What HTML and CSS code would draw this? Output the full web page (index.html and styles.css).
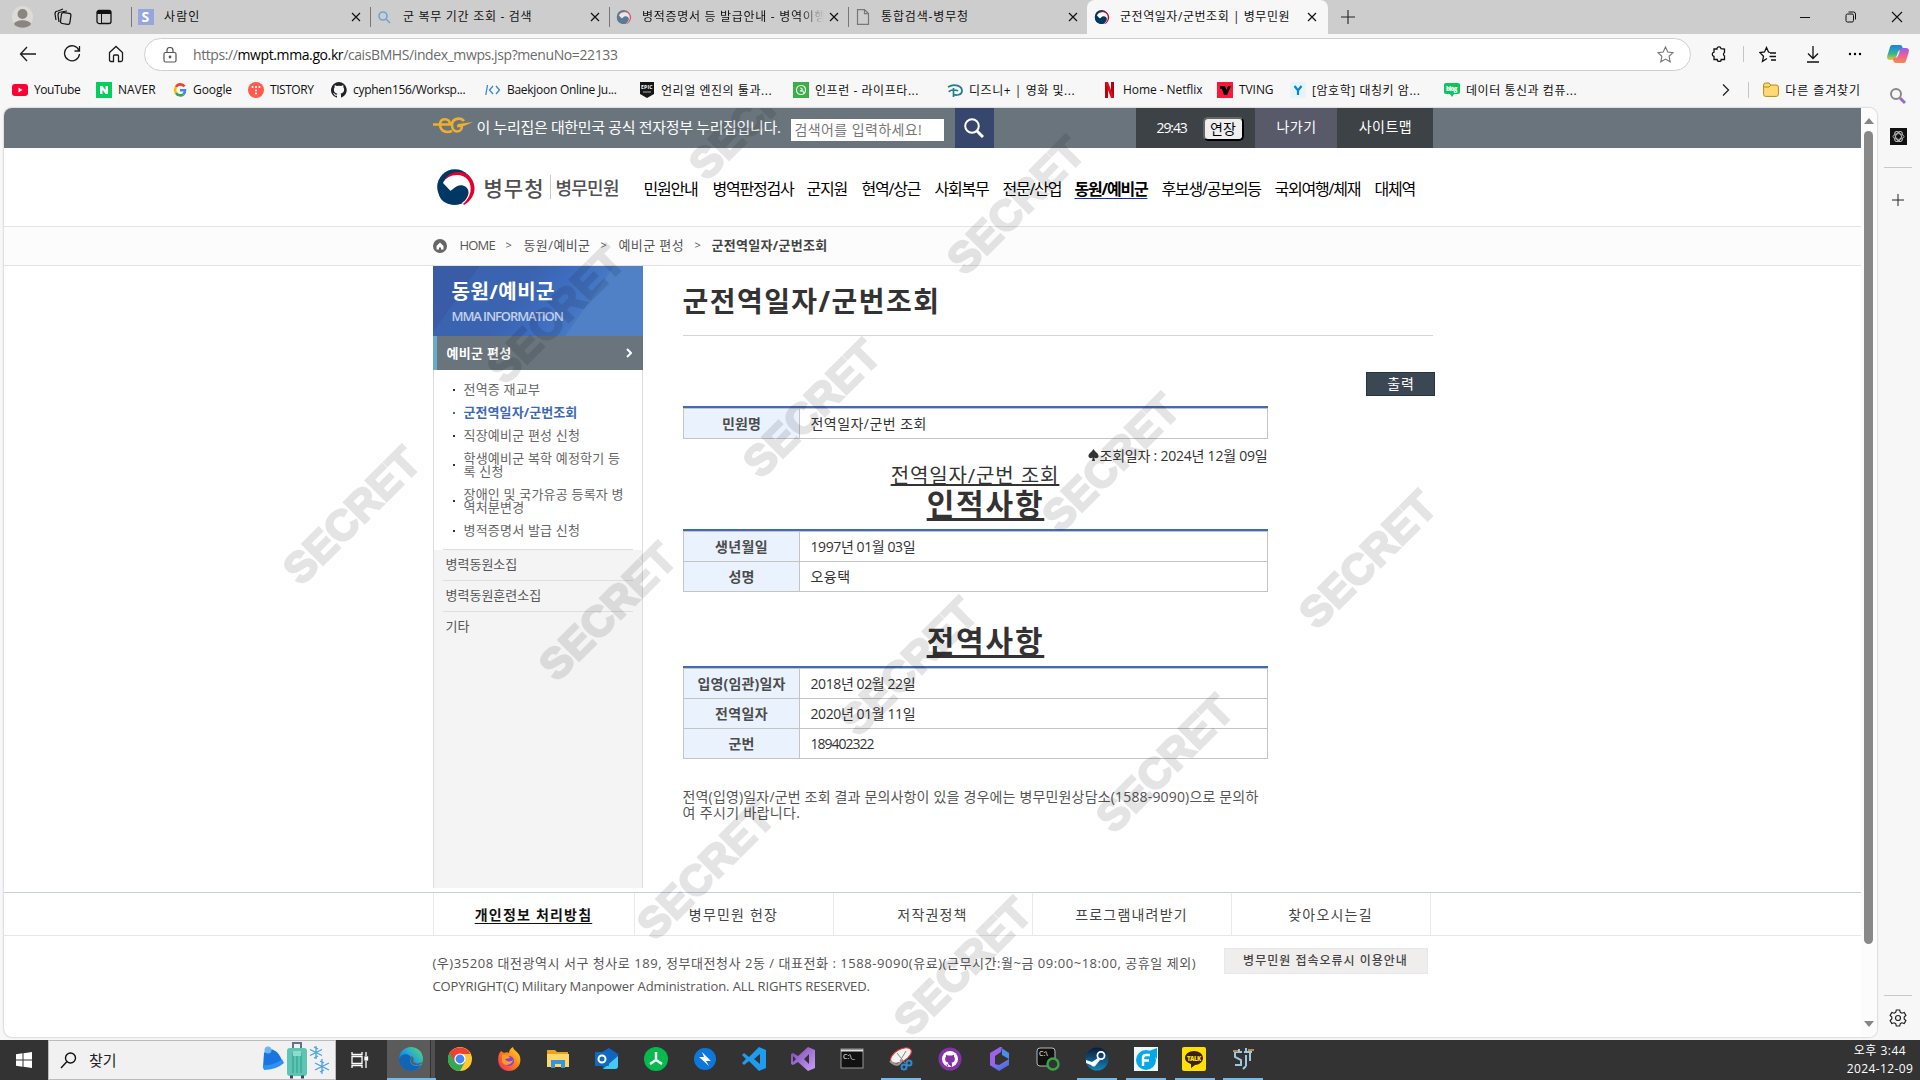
FILE: index.html
```html
<!DOCTYPE html>
<html lang="ko">
<head>
<meta charset="utf-8">
<title>군전역일자/군번조회 | 병무민원</title>
<link rel="stylesheet" href="styles.css">
</head>
<body>
<svg width="0" height="0" class="defs">
  <defs>
    <symbol id="x" viewBox="0 0 12 12"><path d="M2 2l8 8M10 2l-8 8" stroke="#111" stroke-width="1.2"/></symbol>
    <symbol id="taegeuk" viewBox="0 0 38 36">
      <circle cx="18" cy="18" r="17.800" fill="#003764"/>
      <path d="M8 10C13 2 27 0 34 9c7 10 3 21-7 27z" fill="#e4002b"/>
      <path d="M6 14C10 5 25 3 31 11c5 7 3 17-5 24z" fill="#fff"/>
      <path d="M4 16c1 8 8 8 12 4 4-4 9-5 13-2 5 4 2 12-4 16-9 4-20 1-23-8z" fill="#003764"/>
    </symbol>
    <linearGradient id="gEdge" x1="0" y1="1" x2="1" y2="0"><stop offset="0" stop-color="#0c59a4"/><stop offset=".5" stop-color="#1b9de2"/><stop offset="1" stop-color="#5fe06a"/></linearGradient>
    <linearGradient id="gVs" x1="0" y1="0" x2="1" y2="1"><stop offset="0" stop-color="#7b45b5"/><stop offset="1" stop-color="#c8a0f5"/></linearGradient>
    <linearGradient id="gFox" x1="0" y1="1" x2="1" y2="0"><stop offset="0" stop-color="#f0246b"/><stop offset=".5" stop-color="#ff7a1c"/><stop offset="1" stop-color="#ffe226"/></linearGradient>
    <linearGradient id="g365" x1="0" y1="0" x2="1" y2="1"><stop offset="0" stop-color="#b06cf0"/><stop offset="1" stop-color="#2f6fe0"/></linearGradient>
    <linearGradient id="gSteam" x1="0" y1="0" x2="0" y2="1"><stop offset="0" stop-color="#0b1a3c"/><stop offset="1" stop-color="#1287b8"/></linearGradient>
    <linearGradient id="gCo1" x1="0" y1="0" x2="0" y2="1"><stop offset="0" stop-color="#1f7fe8"/><stop offset=".6" stop-color="#32b98c"/><stop offset="1" stop-color="#f4c62c"/></linearGradient>
    <linearGradient id="gCo2" x1="0" y1="0" x2="0" y2="1"><stop offset="0" stop-color="#9a5bf0"/><stop offset=".5" stop-color="#ec5f9c"/><stop offset="1" stop-color="#fb8a4a"/></linearGradient>
  </defs>
</svg>

<header class="tabs">
  <div class="tab-tools">
    <svg width="21" height="28" viewBox="0 0 21 28"><ellipse cx="10.500" cy="14" rx="10.500" ry="11" fill="#dedbd7"/><circle cx="10.500" cy="11" r="5" fill="#8b8581"/><path d="M2 21c2-5 15-5 17 0-3 5-14 5-17 0z" fill="#8b8581"/></svg>
    <svg width="18" height="18" viewBox="0 0 18 18" fill="none" stroke="#111" stroke-width="1.200"><rect x="7" y="5" width="9.500" height="11" rx="2" transform="rotate(8 12 10)"/><path d="M5 14l-1-7c0-2 1-3 3-3l6-1M2 12L1 6c0-2 1-3 3-3l5-2"/></svg>
    <svg width="16" height="16" viewBox="0 0 16 16" fill="none" stroke="#111" stroke-width="1.300"><rect x="1" y="1.500" width="14" height="13" rx="2"/><path d="M1 3.500h14M4.500 4v10.500" stroke-width="3"/><path d="M4 5v9" stroke="#cdcdcd" stroke-width="2"/></svg>
  </div>
  <div class="tab"><svg width="16" height="16"><rect width="16" height="16" fill="#94a6dd"/><text x="3.500" y="13" font-size="14" font-weight="700" fill="#fff">S</text></svg><span class="tab-title wide">사람인</span><svg class="close"><use href="#x"/></svg></div>
  <div class="tab"><svg width="16" height="16" viewBox="0 0 16 16" fill="none" stroke="#6fa3d6" stroke-width="1.600"><circle cx="6" cy="7" r="4"/><path d="M9 10l4 4"/></svg><span class="tab-title">군 복무 기간 조회 - 검색</span><svg class="close"><use href="#x"/></svg></div>
  <div class="tab"><svg width="16" height="14" opacity=".55"><use href="#taegeuk" width="16" height="14"/></svg><span class="tab-title fade">병적증명서 등 발급안내 - 병역이행</span><svg class="close"><use href="#x"/></svg></div>
  <div class="tab"><svg width="16" height="16" viewBox="0 0 16 16" fill="none" stroke="#777" stroke-width="1.200"><path d="M2.500.6h7l4 4v10.800h-11zM9.500.6v4h4"/></svg><span class="tab-title late">통합검색-병무청</span><svg class="close"><use href="#x"/></svg></div>
  <div class="tab active"><svg width="16" height="14"><use href="#taegeuk" width="16" height="14"/></svg><span class="tab-title">군전역일자/군번조회 | 병무민원</span><svg class="close"><use href="#x"/></svg></div>
  <svg class="newtab" width="14" height="14" viewBox="0 0 14 14" stroke="#222" stroke-width="1.100"><path d="M7 0v14M0 7h14"/></svg>
  <div class="winctl">
    <svg width="12" height="12" viewBox="0 0 12 12" stroke="#111"><path d="M1 6.500h10"/></svg>
    <svg width="12" height="12" viewBox="0 0 12 12" fill="none" stroke="#111"><rect x="1" y="3" width="7.500" height="8" rx="1.500"/><path d="M3.500 1h5q2 0 2 2v5.500"/></svg>
    <svg width="12" height="12" viewBox="0 0 12 12" stroke="#111" stroke-width="1.100"><path d="M1 1l10 10M11 1L1 11"/></svg>
  </div>
</header>

<div class="toolbar">
  <div class="nav-icons">
    <svg width="18" height="18" viewBox="0 0 18 18" fill="none" stroke="#1b1b1b" stroke-width="1.300"><path d="M17 9H1.500M8 2L1.500 9 8 16"/></svg>
    <svg width="18" height="18" viewBox="0 0 18 18" fill="none" stroke="#1b1b1b" stroke-width="1.300"><path d="M16 5.500A7.500 7.500 0 1 0 16.500 9M16.500 1v5h-5"/></svg>
    <svg width="16" height="18" viewBox="0 0 16 18" fill="none" stroke="#1b1b1b" stroke-width="1.300"><path d="M1.500 7.500L8 1.500l6.500 6v7.500q0 1.500-1.500 1.500h-2.500V11q0-1-1-1h-3q-1 0-1 1v5.500H3q-1.500 0-1.500-1.500z"/></svg>
  </div>
  <div class="url">
    <svg width="14" height="16" viewBox="0 0 14 16" fill="none" stroke="#555" stroke-width="1.200"><rect x="1" y="5.500" width="12" height="9.500" rx="1.500"/><path d="M4 5.500V3.500a3 3 0 0 1 6 0v2"/><circle cx="7" cy="10" r=".8" fill="#555"/></svg>
    <span class="address">https://<b>mwpt.mma.go.kr</b>/caisBMHS/index_mwps.jsp?menuNo=22133</span>
    <svg width="17" height="17" viewBox="0 0 17 17" fill="none" stroke="#777" stroke-width="1.100"><path id="star" d="M8.500 1l2.300 5 5.200.6-3.900 3.700 1.100 5.500-4.700-2.700-4.700 2.700 1.100-5.500L1 6.600 6.200 6z"/></svg>
  </div>
  <div class="actions">
    <svg width="16" height="16" viewBox="0 0 16 16" fill="none" stroke="#111" stroke-width="1.300"><path d="M3 3h3a2 2 0 0 1 4-.3L13.500 3v3.500a2 2 0 0 0 0 3.500v3.500h-3.300a2 2 0 0 1-4 0H3V10.500a2.200 2.200 0 0 1 0-4.300z"/></svg>
    <i class="sep"></i>
    <svg width="18" height="17" viewBox="0 0 18 17" fill="none" stroke="#111" stroke-width="1.300"><path d="M11 6.500L9.500 6 7.500 1.500 5.500 6 1 6.600l3.500 3.700-1 5L8 12.500M11 7h6M10.500 10.500h6.500M12 14h5"/></svg>
    <svg width="14" height="17" viewBox="0 0 14 17" fill="none" stroke="#111" stroke-width="1.300"><path d="M7 0v12M2 7.500l5 5 5-5M1 16h12"/></svg>
    <svg width="14" height="4"><circle cx="2" cy="2" r="1.200"/><circle cx="7" cy="2" r="1.200"/><circle cx="12" cy="2" r="1.200"/></svg>
  </div>
  <svg class="copilot" width="22" height="20" viewBox="0 0 22 20"><path d="M5 1h8q2 0 2.500 2L16 6h-2q-2 0-3 2l-2 6q-1 2-3 2H3q-4 0-2.500-5L3 3Q3.500 1 5 1z" fill="url(#gCo1)"/><path d="M17 19H9q-2 0-2.500-2L6 14h2q2 0 3-2l2-6q1-2 3-2h3q4 0 2.500 5L19 17q-.5 2-2 2z" fill="url(#gCo2)"/></svg>
</div>

<div class="bookmarks">
  <div class="bm-list">
    <a><svg width="16" height="12"><rect width="16" height="12" rx="3" fill="#f03"/><path d="M6.500 3.500v5l4-2.500z" fill="#fff"/></svg><span class="tight">YouTube</span></a>
    <a><svg width="16" height="16"><rect width="16" height="16" fill="#03cf5d"/><path d="M4 12V4h2.500l3 4.300V4H12v8H9.500l-3-4.300V12z" fill="#fff"/></svg><span class="flat">NAVER</span></a>
    <a><svg width="14" height="16" viewBox="0 0 14 16" fill="none" stroke-width="2.600"><path d="M11.500 4.500A5 5 0 0 0 3 5" stroke="#ea4335"/><path d="M3 5a5.500 5.500 0 0 0 0 6" stroke="#fbbc05"/><path d="M3 11a5 5 0 0 0 7.500 1.200" stroke="#34a853"/><path d="M10.500 12.200A5 5 0 0 0 12 8.300H7" stroke="#4285f4"/></svg><span class="flat">Google</span></a>
    <a><svg width="16" height="16"><circle cx="8" cy="8" r="8" fill="#ff5a4a"/><g fill="#fff"><circle cx="4.500" cy="5" r="1.100"/><circle cx="8" cy="5" r="1.100"/><circle cx="11.500" cy="5" r="1.100"/><circle cx="8" cy="8.300" r="1.100"/><circle cx="8" cy="11.500" r="1.100"/></g></svg><span class="tight">TISTORY</span></a>
    <a><svg width="16" height="16" viewBox="0 0 16 16"><path id="gh" d="M8 0a8 8 0 0 0-2.500 15.600c.4 0 .5-.2.500-.4v-1.500c-2.200.5-2.700-1-2.700-1-.4-.9-.9-1.200-.9-1.200-.7-.5.100-.5.100-.5.800.1 1.200.8 1.200.8.700 1.200 1.900.9 2.300.7.100-.5.300-.9.500-1.100-1.800-.2-3.600-.9-3.600-4 0-.9.300-1.600.8-2.100-.1-.2-.4-1 .1-2.100 0 0 .7-.2 2.200.8a7.500 7.500 0 0 1 4 0c1.500-1 2.200-.8 2.200-.8.400 1.100.2 1.900.1 2.100.5.600.8 1.300.8 2.100 0 3.100-1.900 3.800-3.700 4 .3.300.6.800.6 1.500v2.200c0 .2.100.5.500.4A8 8 0 0 0 8 0z" fill="#1f2328"/></svg><span class="mid">cyphen156/Worksp...</span></a>
    <a><svg width="16" height="12" viewBox="0 0 16 12" fill="none" stroke="#3a86c8" stroke-width="1.300"><path d="M2.500 1L.8 11M8 2L4.500 6 8 10M11 2l3.500 4L11 10"/></svg><span class="mid">Baekjoon Online Ju...</span></a>
    <a><svg width="15" height="16"><path d="M0 0h14v12l-7 4-7-4z" fill="#161616"/><text x="1" y="7" font-size="5" font-weight="700" fill="#fff" textLength="12">EPIC</text><path d="M3 10h8" stroke="#aaa"/></svg><span>언리얼 엔진의 툴과...</span></a>
    <a><svg width="16" height="16" fill="none"><rect width="16" height="16" fill="#3fae49"/><path d="M8 3.500c3 0 4.500 2 4.500 4.500S11 12.500 8 12.500 3.500 10.500 3.500 8 5 3.500 8 3.500zM7 6c3 0 3 2 0 3h3l1 2" stroke="#e8f7e8" stroke-width="1.200"/></svg><span>인프런 - 라이프타...</span></a>
    <a><svg width="16" height="16" fill="none" stroke="#1b7f8f" stroke-width="1.700"><path d="M1 5c7-4 14-1 14 4 0 4-6 5-9 3M6.500 6v9M2 10c1-3 8-2 9-1"/></svg><span>디즈니+ | 영화 및...</span></a>
    <a><svg width="15" height="16"><path d="M3 0h3v16H3zM9 0h3v16H9z" fill="#b1060f"/><path d="M3 0h3l6 16H9z" fill="#e50914"/></svg><span class="flat">Home - Netflix</span></a>
    <a><svg width="16" height="16"><rect width="16" height="16" fill="#ff153c"/><path d="M3 4h5l1.500 4L11 4h3l-4 9H7L5 7H3z"/></svg><span class="flat">TVING</span></a>
    <a><svg width="16" height="16"><rect width="16" height="16" fill="#e6f4fc"/><path d="M4.500 4L8 8.500 11.500 4M8 8.500V13" stroke="#0a86cf" stroke-width="2.200" fill="none"/></svg><span>[암호학] 대칭키 암...</span></a>
    <a><svg width="16" height="16"><path d="M2 1h12q2 0 2 2v7q0 2-2 2h-4l-2 3-2-3H2q-2 0-2-2V3q0-2 2-2z" fill="#0bc75b"/><text x="2" y="9" font-size="6" font-weight="800" fill="#fff" textLength="12">blog</text></svg><span>데이터 통신과 컴퓨...</span></a>
  </div>
  <svg class="more" width="8" height="12" viewBox="0 0 8 12" fill="none" stroke="#222" stroke-width="1.300"><path d="M1 .5L6.500 6 1 11.500"/></svg>
  <i class="sep"></i>
  <a class="folder"><svg width="16" height="15" viewBox="0 0 16 15"><path d="M.6 3q0-2 2-2h3.500l1.500 2H13q2.400 0 2.400 2v7q0 2.400-2 2.400H2.600q-2 0-2-2z" fill="#ffd978" stroke="#b98a10"/><path d="M1 5h5l2-2" fill="none" stroke="#b98a10"/></svg><span>다른 즐겨찾기</span></a>
</div>

<div class="body">
  <div class="viewport">
    <div class="page">
      <div class="gov">
        <div class="wrap gov-row">
          <svg width="40" height="18" viewBox="0 0 40 18" fill="none" stroke="#eeb02c" stroke-width="2.600"><path d="M0 7.500h17c0-7-10-7-10-.5 0 8 7 9 12 7M31 4c-3-4-12-3-12 4 0 9 10 8 10 1h-5"/><path d="M25 7L40 5l-9 4h-6z" fill="#eeb02c" stroke="none"/></svg>
          <span class="gov-text">이 누리집은 대한민국 공식 전자정부 누리집입니다.</span>
          <span class="search">검색어를 입력하세요!</span>
          <span class="search-btn"><svg width="20" height="20" viewBox="0 0 20 20" fill="none" stroke="#fff"><circle cx="8" cy="8" r="6.800" stroke-width="2"/><path d="M13 13l6 6" stroke-width="3"/></svg></span>
          <div class="session"><span>29:43</span><button>연장</button></div>
          <a class="exit">나가기</a><a class="sitemap">사이트맵</a>
        </div>
      </div>
      <div class="head">
        <div class="wrap head-row">
          <div class="logo"><svg width="38" height="36"><use href="#taegeuk" width="38" height="36"/></svg><span class="l1">병무청</span><i></i><span class="l2">병무민원</span></div>
          <nav><a>민원안내</a><a>병역판정검사</a><a>군지원</a><a>현역/상근</a><a>사회복무</a><a>전문/산업</a><a class="on">동원/예비군</a><a>후보생/공보의등</a><a>국외여행/체재</a><a>대체역</a></nav>
        </div>
      </div>
      <div class="crumbs">
        <div class="wrap crumb-row"><svg width="14" height="14"><circle cx="7" cy="7" r="7" fill="#666"/><path d="M3.500 7L7 3.500 10.500 7v3.500H8v-2H6v2H3.500z" fill="#fff"/></svg><a class="home">HOME</a><em>&gt;</em><a class="c1">동원/예비군</a><em>&gt;</em><a class="c2">예비군 편성</a><em>&gt;</em><b>군전역일자/군번조회</b></div>
      </div>
      <div class="wrap columns">
        <aside>
          <div class="side-top"><h2>동원/예비군</h2><p>MMA INFORMATION</p></div>
          <div class="side-sec"><span>예비군 편성</span><svg width="6" height="10" viewBox="0 0 6 10" fill="none" stroke="#fff" stroke-width="2"><path d="M1 1l4 4-4 4"/></svg></div>
          <ul><li>전역증 재교부</li><li class="on">군전역일자/군번조회</li><li>직장예비군 편성 신청</li><li>학생예비군 복학 예정학기 등<br>록 신청</li><li>장애인 및 국가유공 등록자 병<br>역처분변경</li><li>병적증명서 발급 신청</li></ul>
          <div class="side-more"><a>병력동원소집</a><a>병력동원훈련소집</a><a>기타</a></div>
        </aside>
        <main>
          <h1>군전역일자/군번조회</h1>
          <div class="print"><button>출력</button></div>
          <div class="doc">
            <dl><dt>민원명</dt><dd class="ko">전역일자/군번 조회</dd></dl>
            <p class="date"><svg width="11" height="12" viewBox="0 0 11 12"><path d="M5.500 0C7 3 11 4.500 10.500 7.500 10 9.500 7.500 9.500 6.200 8.500L7 12H4l.8-3.500C3.500 9.500 1 9.500.5 7.500 0 4.500 4 3 5.500 0z" fill="#333"/></svg><span>조회일자 : 2024년 12월 09일</span></p>
            <p class="doc-title"><u>전역일자/군번 조회</u></p>
            <h3><u>인적사항</u></h3>
            <dl><dt class="w">생년월일</dt><dd>1997년 01월 03일</dd><dt>성명</dt><dd class="ko">오융택</dd></dl>
            <h3 class="second"><u>전역사항</u></h3>
            <dl><dt>입영(임관)일자</dt><dd>2018년 02월 22일</dd><dt class="w">전역일자</dt><dd>2020년 01월 11일</dd><dt>군번</dt><dd class="num">189402322</dd></dl>
            <p class="note">전역(입영)일자/군번 조회 결과 문의사항이 있을 경우에는 병무민원상담소(1588-9090)으로 문의하<br><span>여 주시기 바랍니다.</span></p>
          </div>
        </main>
      </div>
      <footer>
        <div class="foot-menu"><div class="wrap foot-row"><a class="on">개인정보 처리방침</a><a>병무민원 헌장</a><a>저작권정책</a><a>프로그램내려받기</a><a>찾아오시는길</a></div></div>
        <div class="wrap foot-info">
          <div class="addr"><p class="a1">(우)35208 대전광역시 서구 청사로 189, 정부대전청사 2동 / 대표전화 : 1588-9090(유료)(근무시간:월~금 09:00~18:00, 공휴일 제외)</p><p class="a2">COPYRIGHT(C) Military Manpower Administration. ALL RIGHTS RESERVED.</p></div>
          <a class="err">병무민원 접속오류시 이용안내</a>
        </div>
      </footer>
    </div>
    <div class="scroll">
      <svg width="10" height="6"><path d="M5 0l5 6H0z" fill="#858585"/></svg><i></i><svg class="down" width="10" height="6"><path d="M5 6l5-6H0z" fill="#858585"/></svg>
    </div>
    <div class="marks">
      <span class="m1">SECRET</span><span class="m2">SECRET</span><span class="m3">SECRET</span><span class="m4">SECRET</span><span class="m5">SECRET</span><span class="m6">SECRET</span><span class="m7">SECRET</span><span class="m8">SECRET</span><span class="m9">SECRET</span><span class="m10">SECRET</span><span class="m11">SECRET</span><span class="m12">SECRET</span>
    </div>
  </div>
  <div class="edgebar">
    <svg class="e1" width="18" height="18" viewBox="0 0 18 18" fill="none"><circle cx="7" cy="7" r="5" stroke="#888" stroke-width="2"/><path d="M11 11l5 5" stroke="#9a6ad0" stroke-width="3"/></svg>
    <svg class="e2" width="17" height="17" viewBox="0 0 17 17" fill="none" stroke="#bbb" stroke-width=".9"><rect width="17" height="17" fill="#111" stroke="none"/><ellipse cx="8.500" cy="8.500" rx="5.500" ry="2.800"/><ellipse cx="8.500" cy="8.500" rx="5.500" ry="2.800" transform="rotate(60 8.500 8.500)"/><ellipse cx="8.500" cy="8.500" rx="5.500" ry="2.800" transform="rotate(120 8.500 8.500)"/></svg>
    <hr>
    <svg class="e3" width="12" height="12" stroke="#222"><path d="M6 0v12M0 6h12"/></svg>
    <hr class="low">
    <svg class="e4" width="18" height="18" viewBox="0 0 18 18" fill="none" stroke="#222" stroke-width="1.200"><path d="M7.300 1h3.400l.6 2.300 1.600.9 2.300-.7 1.700 3-1.700 1.600v1.800l1.700 1.600-1.700 3-2.300-.7-1.600.9-.6 2.300H7.300l-.6-2.300-1.600-.9-2.300.7-1.700-3 1.700-1.600V8.100L1.100 6.500l1.700-3 2.300.7 1.600-.9z"/><circle cx="9" cy="9" r="2.500"/></svg>
  </div>
</div>

<div class="taskbar">
  <div class="start"><svg width="16" height="16" fill="#fff"><path d="M0 2.200L6.500 1.300V7.500H0zM7.500 1.200L16 0v7.500H7.500zM0 8.500h6.500v6.200L0 13.800zM7.500 8.500H16V16l-8.500-1.200z"/></svg></div>
  <div class="find">
    <svg width="17" height="17" viewBox="0 0 17 17" fill="none" stroke="#111" stroke-width="1.400"><circle cx="10.500" cy="6" r="5"/><path d="M7 9.500L1 16"/></svg>
    <span>찾기</span>
    <svg class="art" width="70" height="38" viewBox="0 0 70 38">
      <path d="M2 12C8 4 17 10 20 20c-4 5-13 7-19 6z" fill="#1976e0"/><path d="M1 24q11 1 19-6l2 4q-8 7-20 7-2-3-1-5z" fill="#2f91f2"/><circle cx="6" cy="9" r="3.500" fill="#6cb4f7"/>
      <path d="M31 8V2h8v6" fill="none" stroke="#667089" stroke-width="2"/><rect x="25" y="7" width="20" height="28" rx="3" fill="#5cc5b4"/><path d="M31 12v20M35 12v20M39 12v20" stroke="#3fa898" stroke-width="1.500"/><rect x="31" y="10" width="8" height="5" fill="#8fdccf"/><path d="M28 36h3M39 36h3" stroke="#445" stroke-width="3"/>
      <g stroke="#4c9fe4" stroke-width="1.300"><path d="M54 5v13M48 8.500l12 6M60 8.500l-12 6M52 6l4 2M52 17l4-2M60 18v15M53 22l14 7M67 22l-14 7M58 20l4 2M58 31l4-2"/></g>
    </svg>
  </div>
  <div class="view"><svg width="18" height="18" viewBox="0 0 18 18" fill="none" stroke="#fff" stroke-width="1.300"><path d="M1 1v2.500h10V1M1 17v-2.500h10V17M1 5.500h10v7H1zM15 1v4M15 10v7"/><rect x="14" y="6" width="2.500" height="3" fill="#fff"/></svg></div>
  <div class="apps">
    <span class="cur"><svg viewBox="0 0 24 24"><circle cx="12" cy="12" r="12" fill="url(#gEdge)"/><path d="M0 12C2 7 8 6 11 9c2 2 0 3 0 6 1 4 6 5 11 3-3 5-8 7-13 5.500C3 22 0 17 0 12z" fill="#1264b4"/><path d="M12 9c3 1 3 4 2 5 1 3 6 3 10 1-1 1-3 3-6 3-4 0-7-2-6-5 0-1 1-2 0-4z" fill="#5b5b5b"/></svg></span>
    <span><svg viewBox="0 0 24 24"><circle cx="12" cy="12" r="12" fill="#fcc934"/><path d="M1.600 6A12 12 0 0 0 12 24l5-9-5-3z" fill="#34a853"/><path d="M1.600 6L7 15l5-8h10.400A12 12 0 0 0 1.600 6z" fill="#ea4335"/><circle cx="12" cy="12" r="5.600" fill="#fff"/><circle cx="12" cy="12" r="4.400" fill="#4285f4"/></svg></span>
    <span><svg viewBox="0 0 24 24"><path d="M2 7l2-3 3 2c2-1 4-1 5 0 0-3 2-5 4-6 0 3 6 5 7 10 2 8-4 14-11 14S-1 18 2 7z" fill="url(#gFox)"/><circle cx="12" cy="14" r="5" fill="#8044d8"/><path d="M5 8c3-1 7 0 8 3-2 0-3 1-5 1 1 3 6 3 8 1-1 5-8 7-11 2z" fill="#ff9a24"/></svg></span>
    <span><svg viewBox="0 0 24 24"><path d="M1 3h8l2 2h11v3H1z" fill="#e7a320"/><path d="M1 7h22v13H1z" fill="#ffd667"/><path d="M5 21v-8h14v8h-4v-4H9v4z" fill="#3596df"/></svg></span>
    <span><svg viewBox="0 0 24 24"><path d="M5 6l9-5 9 6v12q0 3-3 3H8z" fill="#1264c0"/><path d="M8 22L23 9v10q0 3-3 3z" fill="#46c8f3"/><rect y="5" width="14" height="14" rx="1" fill="#0f6cbd"/><circle cx="7" cy="12" r="3.500" fill="none" stroke="#fff" stroke-width="2"/></svg></span>
    <span><svg viewBox="0 0 24 24"><circle cx="12" cy="12" r="12" fill="#08b94f"/><path d="M12 5v8M12 13l-6 4M12 13l6 4" stroke="#fff" stroke-width="2.400"/></svg></span>
    <span><svg viewBox="0 0 24 24"><circle cx="12" cy="12" r="11" fill="#0d78db"/><path d="M9 5l9 9h-5l3 5-10-9h5z" fill="#fff"/></svg></span>
    <span><svg viewBox="0 0 24 24"><path d="M17 0l7 3v18l-7 3L7 14l-5 4-2-2 4-4-4-4 2-2 5 4zM18 7l-6 5 6 5z" fill="#1f9cf0" fill-rule="evenodd"/></svg></span>
    <span><svg viewBox="0 0 24 24"><path d="M17 0l7 3v18l-7 3L7 15l-5 3-2-1V7l2-1 5 3zM18 7l-5 5 5 5zM2 9v6l3-3z" fill="url(#gVs)" fill-rule="evenodd"/></svg></span>
    <span><svg viewBox="0 0 24 24"><rect x="1" y="2" width="22" height="19" fill="#111" stroke="#999"/><path d="M1 3.500h22" stroke="#ddd" stroke-width="2"/><text x="3" y="12" font-size="7" fill="#fff">C:\_</text></svg></span>
    <span class="open"><svg viewBox="0 0 24 24"><ellipse cx="12" cy="8.500" rx="11.500" ry="6" fill="#f3f3f3" stroke="#d33" transform="rotate(-30 12 8.500)"/><path d="M1 14q8 8 12-1" fill="none" stroke="#999" stroke-width="2"/><path d="M8 6l8 10M17 4l-6 10" stroke="#888"/><g fill="none" stroke="#2c8bd0" stroke-width="2"><circle cx="15" cy="20" r="2.500"/><circle cx="20" cy="16" r="2.500"/></g></svg></span>
    <span><svg viewBox="0 0 24 24"><circle cx="12" cy="12" r="11.500" fill="#8534a8"/><svg x="4" y="4" width="16" height="16" viewBox="0 0 16 16"><circle cx="8" cy="8" r="8" fill="#fff"/><path d="M6 16v-2.400c-2 .4-2.700-1-3-1.600M10 16v-3c0-.6-.2-1-.5-1.300 2-.3 3.400-1.300 3.400-3.700 0-1-.3-1.700-.8-2.300l-.1-2L10 4.500H6L4 3.700l-.1 2C3.400 6.300 3.100 7 3.100 8c0 2.400 1.400 3.400 3.400 3.700-.3.300-.5.700-.5 1.300" fill="#8534a8"/></svg></svg></span>
    <span><svg viewBox="0 0 24 24"><path d="M13 0L3 6v12l5 3V9l6-4 1-5z" fill="#9a63e8"/><path d="M13 0l9 6v6l-7-4V1z" fill="#4a8df0"/><path d="M3 16l9 2 10-6v6l-10 6-9-6z" fill="url(#g365)"/></svg></span>
    <span><svg viewBox="0 0 24 24"><rect x="1" y="1" width="18" height="18" rx="3" fill="#111" stroke="#bbb"/><text x="3" y="9" font-size="7" fill="#fff">C:\</text><circle cx="17" cy="17" r="5.500" fill="#333" stroke="#37a548" stroke-width="2.400"/></svg></span>
    <span class="open"><svg viewBox="0 0 24 24"><circle cx="12" cy="12" r="11.500" fill="url(#gSteam)"/><circle cx="16" cy="8.500" r="3.600" fill="none" stroke="#fff" stroke-width="1.800"/><path d="M1 13l6 2 6-4 2 2-4 5q-2 3-5 0l-5-2z" fill="#fff"/></svg></span>
    <span class="open"><svg viewBox="0 0 24 24"><rect width="24" height="24" fill="#eef8fc"/><circle cx="12" cy="13" r="10" fill="#08a8e8"/><path d="M15 4l8-3v11z" fill="#08a8e8"/><path d="M9 19V11q0-3 3-3h4M9 13.500h6" fill="none" stroke="#fff" stroke-width="2.400"/></svg></span>
    <span class="open"><svg viewBox="0 0 24 24"><rect width="24" height="24" rx="2" fill="#fee102"/><path d="M12 4c5 0 9 3 9 7s-4 7-8 7l-4 3v-4c-3-1-6-3-6-6 0-4 4-7 9-7z" fill="#3b1e1e"/><text x="5" y="13.500" font-size="6" font-weight="800" fill="#fee102" textLength="14">TALK</text></svg></span>
    <span class="open"><svg viewBox="0 0 24 24" fill="none" stroke="#9fc8df" stroke-width="2"><path d="M11 5H4v5l6 3v5H4M13 5h8M15 8v11M19 5v9M8 2v3M15 1v4M15 19l-3 3"/><path d="M2 4h5M17 3h6" stroke="#b58b4a"/></svg></span>
  </div>
  <div class="clock"><span class="t">오후 3:44</span><span class="d">2024-12-09</span></div>
</div>
</body>
</html>
```
FILE: styles.css
```css
* { box-sizing: border-box; margin: 0; padding: 0; }
body { width: 1920px; height: 1080px; overflow: hidden; background: #f7f7f7; font-family: "Open Sans", "Noto Sans CJK KR", sans-serif; font-size: 14px; color: #111; display: flex; flex-direction: column; white-space: nowrap; }
svg { flex: none; display: block; }
.defs { position: absolute; }
em, i { font-style: normal; }
button { font-family: inherit; }

/* tab strip */
.tabs { height: 34px; background: #cdcdcd; display: flex; align-items: center; }
.tab-tools { width: 131px; display: flex; align-items: center; gap: 21px; padding-left: 12px; }
.tab-tools svg:nth-child(3) { margin-left: 3px; }
.tab { width: 239px; height: 34px; display: flex; align-items: center; padding-left: 6px; }
.tab::before { content: ""; width: 1px; height: 20px; background: #777; margin-left: -6px; margin-right: 6px; }
.tab svg:first-child { width: 16px; }
.tab-title { flex: 1; margin-left: 10px; font-size: 12px; line-height: 24px; letter-spacing: .7px; overflow: hidden; }
.tab-title.wide { letter-spacing: 1.1px; }
.tab-title.late { letter-spacing: .85px; }
.tab-title.fade { margin-right: 4px; -webkit-mask-image: linear-gradient(90deg, #000 87%, transparent); }
.close { width: 12px; height: 12px; margin-right: 8px; }
.tab.active { background: #f7f7f7; border-radius: 8px 8px 0 0; width: 241px; }
.tab.active::before { background: none; }
.tab.active .close { margin-right: 10px; }
.tab.active .tab-title { letter-spacing: .55px; }
.newtab { margin-left: 13px; }
.winctl { margin-left: auto; display: flex; gap: 34px; padding-right: 17px; }

/* address bar */
.toolbar { height: 40px; display: flex; align-items: center; }
.nav-icons { width: 144px; display: flex; gap: 26px; padding-left: 19px; }
.nav-icons svg:nth-child(3) { margin-left: 1px; }
.url { width: 1547px; height: 33px; margin-top: 1px; background: #fff; border: 1px solid #cfcfcf; border-radius: 17px; display: flex; align-items: center; padding: 0 16px 0 18px; }
.address { flex: 1; margin-left: 16px; font-size: 14px; letter-spacing: -.4px; color: #6b6b6b; }
.address b { font-weight: 400; color: #000; }
.actions { display: flex; align-items: center; margin-left: 20px; gap: 15.5px; }
.actions svg:nth-of-type(3), .actions svg:nth-of-type(4) { margin-left: 13px; }
.sep { width: 1px; height: 16px; background: #c5c5c5; }
.copilot { margin-left: auto; margin-right: 11px; }

/* bookmarks */
.bookmarks { height: 34px; display: flex; align-items: center; padding: 0 59px 3px 12px; font-size: 12px; letter-spacing: .55px; }
.bm-list { display: grid; grid-template-columns: 84px 77px 75px 83px 154px 155px 153px 154px 155px 115px 73px 154px 140px; }
.bookmarks a { display: flex; align-items: center; gap: 6px; }
.tight { letter-spacing: -.45px; }
.flat { letter-spacing: -.07px; }
.mid { letter-spacing: -.28px; }
.more { margin-left: auto; }
.bookmarks .sep { margin: 0 14px 0 18px; }
.bookmarks .folder { letter-spacing: .9px; }

/* viewport frame */
.body { height: 932px; display: flex; }
.viewport { width: 1873px; height: 929px; margin-left: 4px; border-radius: 8px; background: #fff; overflow: hidden; display: flex; position: relative; box-shadow: 0 0 2px rgba(0,0,0,.35); }
.page { width: 1857px; }
.wrap { width: 1000px; margin: 0 auto; }

.gov { height: 40px; background: #69747c; }
.gov-row { display: flex; height: 40px; color: #fff; }
.gov-row > svg { margin-top: 9px; }
.gov-text { width: 318px; padding-left: 4px; font-size: 15px; letter-spacing: -.34px; line-height: 39px; }
.search { width: 153px; height: 22px; margin: 11px 11px 0 0; background: #fff; color: #777; font-size: 14px; line-height: 22px; letter-spacing: .4px; padding-left: 4px; }
.search-btn { width: 39px; background: #37466d; display: flex; justify-content: center; padding-top: 10px; }
.session { width: 119px; margin-left: auto; background: #3d4246; display: flex; align-items: center; padding: 0 0 1px 21px; letter-spacing: -1.1px; }
.session span { width: 46px; }
.session button { width: 41px; height: 24px; margin-top: 3px; border: 2px outset #111; border-radius: 5px; background: #efefef; font-size: 14px; line-height: 20px; letter-spacing: 0; color: #000; }
.exit, .sitemap { background: #585969; width: 82px; line-height: 38px; text-align: center; letter-spacing: .5px; padding-left: 2px; }
.sitemap { background: #3d4246; width: 96px; }

.head { height: 79px; border-bottom: 1px solid #e3e3e3; }
.head-row { display: flex; height: 78px; }
.logo { width: 211px; display: flex; align-items: center; padding-left: 4px; color: #4f5052; }
.l1 { font-size: 21px; font-weight: 500; letter-spacing: 1px; margin-left: 9px; width: 62px; }
.logo i { width: 1px; height: 24px; background: #c8c8c8; margin: 0 5px 0 4px; }
.l2 { font-size: 18px; font-weight: 500; letter-spacing: -.75px; }
nav { display: grid; grid-template-columns: 69px 94px 55px 73px 68px 72px 87px 113px 100px 56px; font-size: 16px; letter-spacing: -1.22px; line-height: 82px; height: 78px; color: #000; }
nav .on { font-weight: 700; text-decoration: underline #0a2fb0 1px; text-underline-offset: 3px; }

.crumbs { height: 39px; background: #fcfcfc; border-bottom: 1px solid #e3e3e3; }
.crumb-row { display: flex; align-items: center; height: 38px; font-size: 13px; line-height: 18px; color: #555; letter-spacing: .4px; }
.crumb-row a, .crumb-row b, .crumb-row em { margin-top: -3px; }
.crumb-row em { width: 34px; padding-left: 10px; font-size: 11px; }
.crumb-row .home { margin-left: 13px; width: 36px; letter-spacing: -.8px; }
.crumb-row .c1 { width: 67px; margin-left: -6px; }
.crumb-row .c2 { width: 66px; margin-left: -6px; }
.crumb-row b { margin-left: -7px; letter-spacing: .3px; color: #444; }

.columns { display: flex; gap: 40px; height: 622px; }
aside { width: 210px; background: #f4f4f4; border: 1px solid #dcdcdc; border-width: 0 1px; }
.side-top, .side-sec { margin: 0 -1px; color: #fff; }
.side-top { height: 70px; padding: 13px 0 0 19px; background: linear-gradient(125deg, #3a5ca6 0 18%, #3a64b0 18% 40%, #3e6cbf 55%, #4678c4 70%, #5080c6 70%); }
.side-top h2 { font-size: 20px; line-height: 26px; letter-spacing: .55px; }
.side-top p { font-size: 13px; font-weight: 600; line-height: 20px; letter-spacing: -1.1px; color: #c3d1ec; margin-top: 1px; }
.side-sec { height: 34px; background: #69747c; border-left: 4px solid #68aac8; display: flex; align-items: center; justify-content: space-between; padding: 0 11px 0 10px; font-size: 13px; font-weight: 700; letter-spacing: .3px; }
.side-sec span { margin-top: -2px; }
aside ul { list-style: none; background: #fff; height: 180px; padding-top: 13px; display: flex; flex-direction: column; gap: 10px; font-size: 13px; line-height: 13px; color: #666; letter-spacing: .2px; }
aside li { padding-left: 30px; position: relative; }
aside li::before { content: ""; width: 2px; height: 2px; background: #333; position: absolute; left: 19px; top: calc(50% - 1px); }
aside li.on { font-weight: 700; color: #3c69b7; letter-spacing: .08px; }
aside li.on::before { background: #3c69b7; }
.side-more { margin: -1px 9px 0; display: flex; flex-direction: column; }
.side-more a { height: 31px; border-top: 1px solid #dedede; padding-left: 3px; font-size: 13px; line-height: 29px; color: #555; }

main { width: 750px; }
h1 { height: 70px; border-bottom: 1px solid #d4d4d4; font-size: 28px; line-height: 70px; letter-spacing: 1.45px; color: #333; }
.print { display: flex; justify-content: flex-end; margin: 36px -2px 10px 0; }
.print button { width: 69px; height: 24px; background: #3b4753; border: 1px solid #2a343e; color: #fff; font-size: 14px; line-height: 22px; letter-spacing: .8px; padding-left: 2px; }
.doc { width: 585px; color: #333; }
dl { display: grid; grid-template-columns: 116px 1fr; border-top: 2px solid #406bb8; box-shadow: inset 0 1px #c4c4c4, inset 1px 0 #c4c4c4, inset -1px 0 #c4c4c4; padding: 1px 1px 0; line-height: 30px; }
dt, dd { height: 30px; border-bottom: 1px solid #c4c4c4; }
dt { background: #eaf2fe; border-right: 1px solid #c4c4c4; text-align: center; font-weight: 700; letter-spacing: .15px; color: #4c4c4c; padding-left: 1px; }
dt.w { letter-spacing: .4px; }
dd { padding-left: 11px; letter-spacing: -.41px; }
dd.ko { letter-spacing: .45px; }
dd.num { letter-spacing: -1px; }
.date { display: flex; justify-content: flex-end; align-items: center; height: 21px; margin-top: 5px; letter-spacing: -.22px; }
.doc-title { font-size: 20px; line-height: 22px; letter-spacing: .9px; text-align: center; }
.doc-title u { text-decoration-thickness: 2px; text-underline-offset: 1px; text-decoration-skip-ink: none; }
h3 { font-size: 30px; line-height: 33px; letter-spacing: 1.8px; text-align: center; padding-left: 21px; margin-bottom: 7px; height: 35px; }
h3 u { text-decoration-thickness: 3px; text-underline-offset: 3px; text-decoration-skip-ink: none; }
h3.second { margin-top: 32px; }
.note { margin-top: 30px; line-height: 16px; color: #555; letter-spacing: .17px; }
.note span { letter-spacing: .35px; }

footer { margin-top: 4px; border-top: 1px solid #c5cde2; }
.foot-menu { height: 43px; border-bottom: 1px solid #e5e7ee; }
.foot-row { display: grid; grid-template-columns: 201px 199px 199px 199px 199px; height: 42px; border-left: 1px solid #e8e9f1; }
.foot-row a { border-right: 1px solid #e8e9f1; text-align: center; line-height: 43px; height: 42px; letter-spacing: 1.2px; color: #444; }
.foot-row .on { font-weight: 700; color: #111; text-decoration: underline; text-underline-offset: 3px; }
.foot-info { display: flex; justify-content: space-between; padding: 12px 5px 0 0; }
.addr { font-size: 13px; color: #555; line-height: 23px; padding-top: 4px; }
.a1 { letter-spacing: .54px; }
.a2 { letter-spacing: -.09px; }
.err { width: 204px; height: 26px; background: #efeeed; border: 1px solid #e6e7ef; text-align: center; font-size: 12px; line-height: 23px; letter-spacing: 1px; font-weight: 500; color: #444; }

/* scrollbar */
.scroll { width: 16px; background: #fcfcfc; display: flex; flex-direction: column; align-items: center; padding-top: 10px; padding-right: 1px; }
.scroll i { width: 9px; height: 813px; border-radius: 5px; background: #888; margin-top: 7px; }
.scroll .down { margin-top: 77px; }

/* diagonal stamps scattered over the page */
.marks { position: absolute; inset: 0; pointer-events: none; opacity: .1; }
.marks span { position: absolute; width: 190px; height: 40px; margin: -20px 0 0 -95px; font: 700 42.5px/40px "Liberation Sans", Arial, sans-serif; text-align: center; transform: rotate(-45deg); color: #000; -webkit-text-stroke: 2.5px #000; }
.m1 { left: 348px; top: 408px; } .m2 { left: 604px; top: 504px; } .m3 { left: 808px; top: 301px; } .m4 { left: 754px; top: 3px; }
.m5 { left: 552px; top: 207px; } .m6 { left: 1012px; top: 98px; } .m7 { left: 1107px; top: 355px; } .m8 { left: 1364px; top: 452px; }
.m9 { left: 905px; top: 559px; } .m10 { left: 1161px; top: 656px; } .m11 { left: 702px; top: 763px; } .m12 { left: 959px; top: 859px; }

.edgebar { width: 43px; display: flex; flex-direction: column; align-items: center; padding-right: 1px; }
.e1 { margin-bottom: 23px; margin-top: -21px; }
.e2 { margin-bottom: 22px; }
.edgebar hr { width: 28px; border: 0; border-top: 1px solid #c8c8c8; }
.e3 { margin-top: 26px; }
.edgebar .low { margin-top: auto; }
.e4 { margin: 13px 0 13px; }

/* taskbar */
.taskbar { height: 40px; background: #333; display: flex; color: #fff; }
.start { width: 48px; display: flex; align-items: center; justify-content: center; }
.find { width: 288px; background: #f1f1f1; border: 1px solid #bbb; display: flex; align-items: center; padding-left: 11px; color: #222; }
.find span { flex: 1; margin: -2px 0 0 12px; font-size: 15px; }
.art { margin-right: 3px; }
.view { width: 51px; display: flex; align-items: center; justify-content: center; padding-right: 4px; }
.apps { display: flex; }
.apps span { width: 48.98px; height: 40px; display: flex; align-items: center; justify-content: center; border-bottom: 2px solid transparent; padding-right: 1px; }
.apps span > svg { width: 24px; height: 24px; }
.apps .cur { background: linear-gradient(90deg, #5b5b5b 43px, #333 43px 44px, #505050 44px 48px, #333 48px); border-bottom-color: #76b9ed; }
.apps .open { background: linear-gradient(#76b9ed, #76b9ed) 4px 100% / 40px 2px no-repeat border-box; }
.clock { margin-left: auto; width: 80px; display: flex; flex-direction: column; align-items: center; font-size: 12px; line-height: 18px; padding-top: 2px; }
.t { letter-spacing: .5px; }
.d { letter-spacing: .38px; }
```
